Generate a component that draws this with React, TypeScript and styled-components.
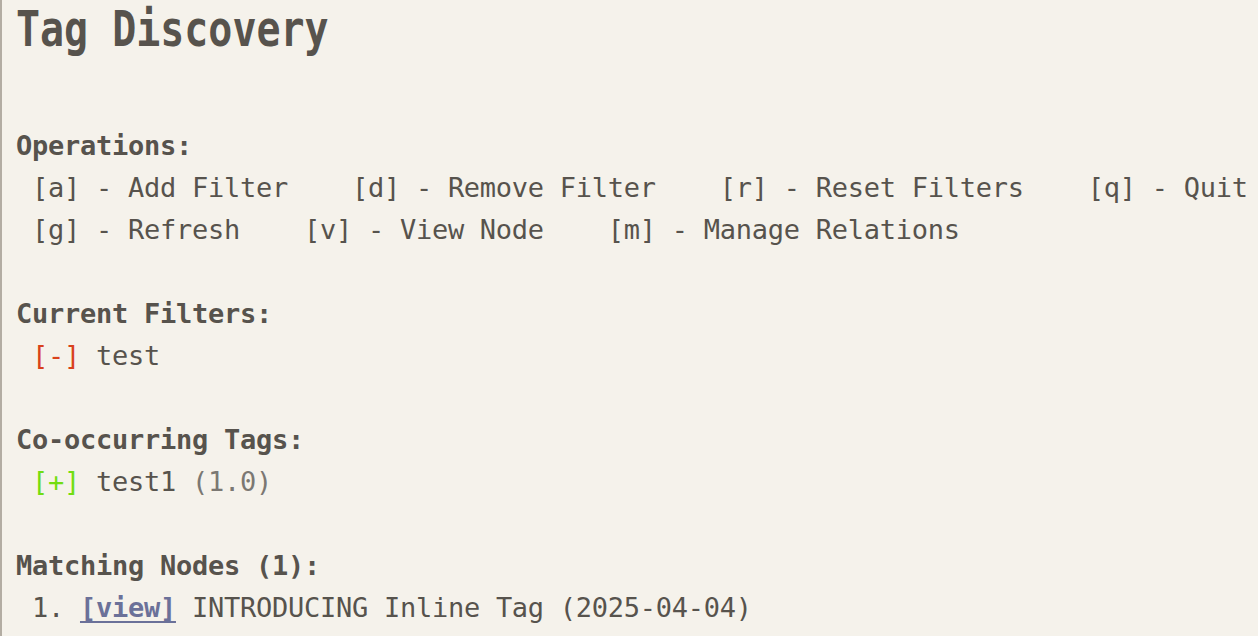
import React from "react";
import styled, { createGlobalStyle } from "styled-components";

const GlobalStyle = createGlobalStyle`
  html, body {
    margin: 0;
    padding: 0;
    background: #f5f2eb;
  }
  body {
    font-family: "DejaVu Sans Mono", "Liberation Mono", monospace;
    color: #57534d;
  }
`;

const Page = styled.div`
  min-height: 636px;
  box-sizing: border-box;
  border-left: 2px solid #b3ada3;
  padding: 1px 0 0 14px;
  background: #f5f2eb;
`;

const Title = styled.h1`
  margin: 0 0 66px;
  height: 58px;
  font-size: 49px;
  line-height: 58px;
  font-weight: bold;
  white-space: pre;
`;

const TitleText = styled.span`
  display: inline-block;
  transform: scaleX(0.815);
  transform-origin: left center;
`;

const Section = styled.section`
  margin-bottom: 42px;
`;

const Line = styled.div<{ $bold?: boolean }>`
  font-size: 27px;
  line-height: 42px;
  height: 42px;
  letter-spacing: -0.26px;
  white-space: pre;
  font-weight: ${(p) => (p.$bold ? "bold" : "normal")};
`;

const Mark = styled.span<{ $tone: "remove" | "add" }>`
  color: ${(p) => (p.$tone === "remove" ? "#d9421c" : "#72dd12")};
`;

const Muted = styled.span`
  color: #7b7873;
`;

const ViewLink = styled.a`
  color: #6b7199;
  font-weight: bold;
  text-decoration: underline;
  text-decoration-thickness: 2px;
  text-underline-offset: 4px;
  cursor: pointer;
`;

const ops = [
  ["[a] - Add Filter", "[d] - Remove Filter", "[r] - Reset Filters", "[q] - Quit"],
  ["[g] - Refresh", "[v] - View Node", "[m] - Manage Relations"],
];

export default function App() {
  return (
    <>
      <GlobalStyle />
      <Page>
        <Title>
          <TitleText>Tag Discovery</TitleText>
        </Title>

        <Section>
          <Line $bold>Operations:</Line>
          {ops.map((row, i) => (
            <Line key={i}>{" " + row.join("    ")}</Line>
          ))}
        </Section>

        <Section>
          <Line $bold>Current Filters:</Line>
          <Line>
            {" "}
            <Mark $tone="remove">[-]</Mark> test
          </Line>
        </Section>

        <Section>
          <Line $bold>Co-occurring Tags:</Line>
          <Line>
            {" "}
            <Mark $tone="add">[+]</Mark> test1 <Muted>(1.0)</Muted>
          </Line>
        </Section>

        <Section>
          <Line $bold>Matching Nodes (1):</Line>
          <Line>
            {" 1. "}
            <ViewLink>[view]</ViewLink> INTRODUCING Inline Tag (2025-04-04)
          </Line>
        </Section>
      </Page>
    </>
  );
}
